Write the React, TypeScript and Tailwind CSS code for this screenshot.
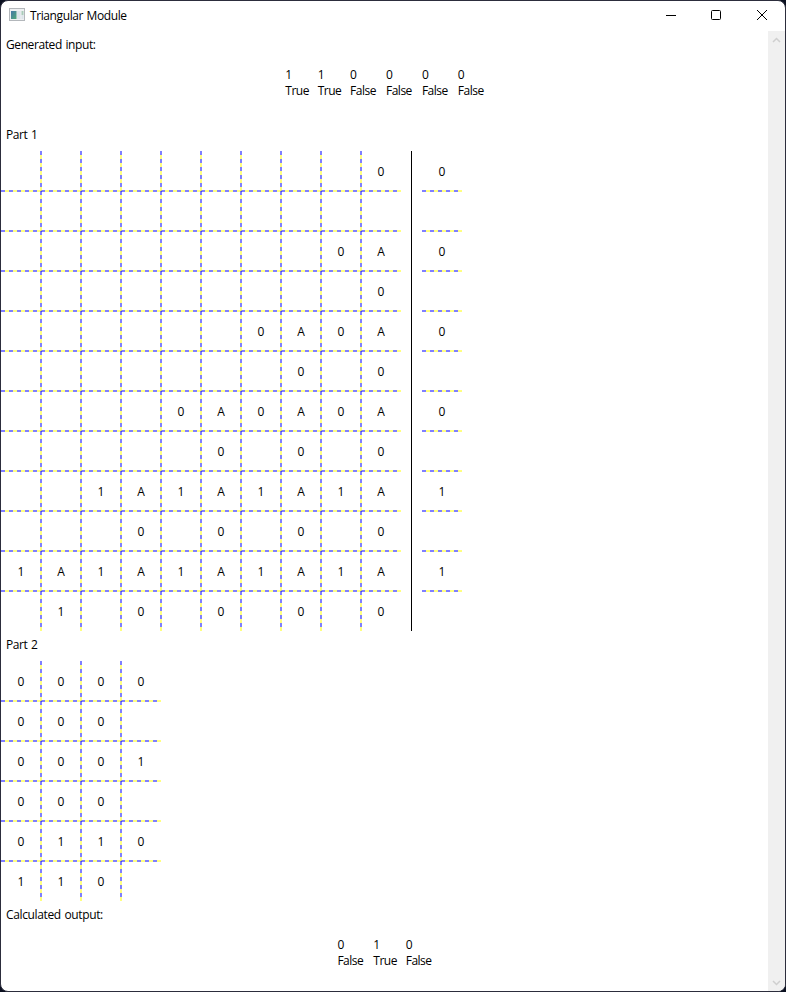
type Cell = string;

// Each character is one cell; a dot is an empty one.
const PART_1 = [
  '.........0',
  '..........',
  '........0A',
  '.........0',
  '......0A0A',
  '.......0.0',
  '....0A0A0A',
  '.....0.0.0',
  '..1A1A1A1A',
  '...0.0.0.0',
  '1A1A1A1A1A',
  '.1.0.0.0.0',
];
const PART_1_RESULT = ['0', '.', '0', '.', '0', '.', '0', '.', '1', '.', '1', '.'];
const PART_2 = ['0000', '000.', '0001', '000.', '0110', '110.'];

function DashedLine({ x1, y1, x2, y2 }: { x1: number; y1: number; x2: number; y2: number }) {
  return (
    <g strokeWidth={2} strokeOpacity={0.5} strokeDasharray="4 4">
      <line x1={x1} y1={y1} x2={x2} y2={y2} stroke="#ffff00" strokeDashoffset={4} />
      <line x1={x1} y1={y1} x2={x2} y2={y2} stroke="#0000ff" />
    </g>
  );
}

function Matrix({ rows }: { rows: string[] }) {
  const cols = rows[0].length;
  const w = cols * 40;
  const h = rows.length * 40;
  return (
    <div className="relative shrink-0" style={{ width: w, height: h }}>
      <svg className="absolute inset-0" width={w} height={h}>
        {rows.slice(1).map((_, i) => (
          <DashedLine key={'h' + i} x1={0} y1={(i + 1) * 40} x2={w} y2={(i + 1) * 40} />
        ))}
        {Array.from({ length: cols - 1 }, (_, i) => (
          <DashedLine key={'v' + i} x1={(i + 1) * 40} y1={0} x2={(i + 1) * 40} y2={h} />
        ))}
      </svg>
      {rows.map((row, r) => (
        <div key={r} className="flex">
          {row.split('').map((c: Cell, i) => (
            <div key={i} className="flex h-10 w-10 items-center justify-center pt-0.5 tracking-normal">
              {c === '.' ? '' : c}
            </div>
          ))}
        </div>
      ))}
    </div>
  );
}

function Bits({ bits }: { bits: string }) {
  return (
    <div className="flex justify-center gap-[10px] pt-px leading-4 tracking-[-0.5px]">
      {bits.split('').map((b, i) => (
        <div key={i} className={b === '1' ? 'w-[22.4px]' : 'w-[25.9px]'}>
          <div>{b}</div>
          <div>{b === '1' ? 'True' : 'False'}</div>
        </div>
      ))}
    </div>
  );
}

function TitleBar() {
  return (
    <div className="flex h-[30px] shrink-0 items-center">
      <svg className="mb-[2px] ml-2 shrink-0" width="16" height="14" viewBox="0 0 16 14">
        <defs>
          <linearGradient id="pane" x1="0" y1="0" x2="1" y2="1">
            <stop offset="0" stopColor="#4477a8" />
            <stop offset="1" stopColor="#4fa878" />
          </linearGradient>
        </defs>
        <rect x="0.5" y="0.5" width="15" height="12" fill="#eef0f2" stroke="#b3b7bb" />
        <rect x="2" y="3" width="5.5" height="8" fill="url(#pane)" />
        <rect x="8" y="3" width="3.5" height="8" fill="#dce3ea" />
        <rect x="12.5" y="3" width="2" height="4" fill="#a9cbb9" />
        <rect x="12.5" y="7" width="2" height="4" fill="#dce3ea" />
      </svg>
      <div className="ml-[5px] flex-1">Triangular Module</div>
      <svg className="shrink-0" width="138" height="30" viewBox="0 0 138 30" fill="none" stroke="#000">
        <path d="M19 14.5h10" />
        <rect x="64.5" y="9.5" width="9" height="9" rx="1" />
        <path d="M110 9l10 10M120 9L110 19" />
      </svg>
    </div>
  );
}

export default function App() {
  return (
    <div className="h-[992px] w-[786px] bg-[#0b1020]">
      <div className="flex h-full flex-col overflow-hidden rounded-lg border border-[#2c2d3c] bg-white font-['Open_Sans','Noto_Sans',sans-serif] text-[12px] leading-4 tracking-[-0.4px] text-black [word-spacing:0.8px]">
        <TitleBar />
        <div className="flex flex-1">
          <div className="flex-1">
            <div className="h-[35px] pt-[6px] pl-[5px]">Generated input:</div>
            <div className="h-[60px]">
              <Bits bits="110000" />
            </div>
            <div className="h-[25px] pt-[1px] pl-[5px]">Part 1</div>
            <div className="flex">
              <Matrix rows={PART_1} />
              <div className="ml-[10px] mr-[10px] w-px bg-black" />
              <Matrix rows={PART_1_RESULT} />
            </div>
            <div className="h-[30px] pt-[6px] pl-[5px]">Part 2</div>
            <Matrix rows={PART_2} />
            <div className="h-[35px] pt-[6px] pl-[5px] tracking-[-0.36px]">Calculated output:</div>
            <Bits bits="010" />
          </div>
          <div className="flex w-[17px] flex-col items-center justify-between bg-[#f0f0f0] pt-[6px] pb-[5px]">
            <svg width="9" height="6" viewBox="0 0 9 6" fill="none" stroke="#cfcfcf" strokeWidth="1.5">
              <path d="M1 5l3.5-3.5L8 5" />
            </svg>
            <svg width="9" height="6" viewBox="0 0 9 6" fill="none" stroke="#cfcfcf" strokeWidth="1.5">
              <path d="M1 1l3.5 3.5L8 1" />
            </svg>
          </div>
        </div>
      </div>
    </div>
  );
}
